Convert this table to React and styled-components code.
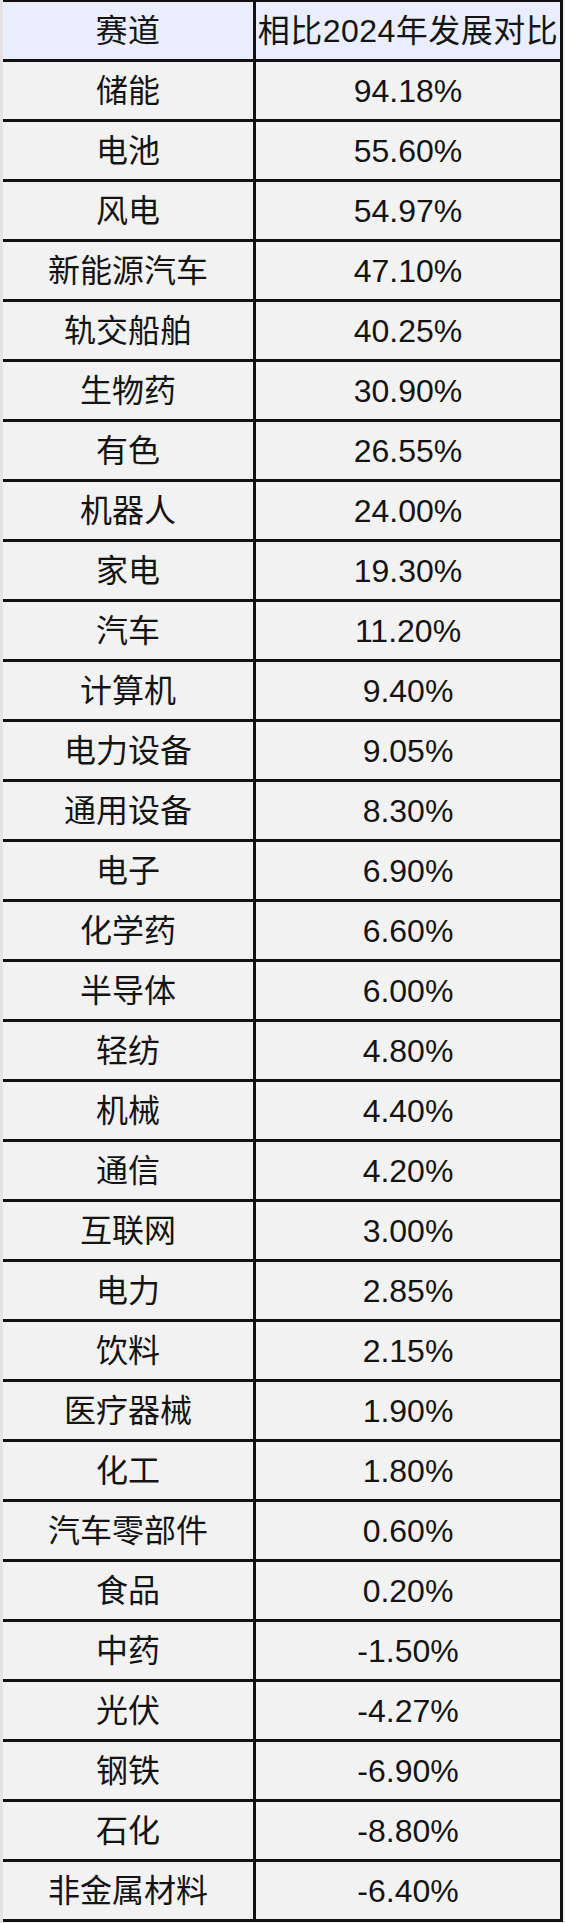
import React from "react";
import styled, { createGlobalStyle } from "styled-components";

const GlobalStyle = createGlobalStyle`
  html, body {
    margin: 0;
    padding: 0;
    background: #f0f0f0;
  }
  body {
    font-family: "Liberation Sans", "Noto Sans CJK SC", sans-serif;
    color: #111;
  }
`;

const Page = styled.div`
  display: flex;
  border-left: 3px solid #e2e2e2;
  min-height: 1923px;
  box-sizing: border-box;
`;

const Table = styled.div`
  display: grid;
  grid-template-columns: 250px 304px;
  grid-auto-rows: 57px;
  gap: 3px;
  background: #111;
  border-top: 2px solid #111;
  border-bottom: 3px solid #111;
  border-right: 3px solid #111;
  align-self: flex-start;
`;

const Cell = styled.div`
  display: flex;
  align-items: center;
  justify-content: center;
  background: ${(p) => (p.$head ? "#e9edfc" : "#f2f2f2")};
  font-size: 32px;
  line-height: 1;
  white-space: nowrap;
  overflow: hidden;
  letter-spacing: ${(p) => (p.$head ? "0.5px" : "0")};
  color: #141414;
`;

const rows = [
  ["储能", "94.18%"],
  ["电池", "55.60%"],
  ["风电", "54.97%"],
  ["新能源汽车", "47.10%"],
  ["轨交船舶", "40.25%"],
  ["生物药", "30.90%"],
  ["有色", "26.55%"],
  ["机器人", "24.00%"],
  ["家电", "19.30%"],
  ["汽车", "11.20%"],
  ["计算机", "9.40%"],
  ["电力设备", "9.05%"],
  ["通用设备", "8.30%"],
  ["电子", "6.90%"],
  ["化学药", "6.60%"],
  ["半导体", "6.00%"],
  ["轻纺", "4.80%"],
  ["机械", "4.40%"],
  ["通信", "4.20%"],
  ["互联网", "3.00%"],
  ["电力", "2.85%"],
  ["饮料", "2.15%"],
  ["医疗器械", "1.90%"],
  ["化工", "1.80%"],
  ["汽车零部件", "0.60%"],
  ["食品", "0.20%"],
  ["中药", "-1.50%"],
  ["光伏", "-4.27%"],
  ["钢铁", "-6.90%"],
  ["石化", "-8.80%"],
  ["非金属材料", "-6.40%"],
];

export default function App() {
  return (
    <>
      <GlobalStyle />
      <Page>
        <Table>
          <Cell $head>赛道</Cell>
          <Cell $head>相比2024年发展对比</Cell>
          {rows.map(([name, val]) => (
            <React.Fragment key={name}>
              <Cell>{name}</Cell>
              <Cell>{val}</Cell>
            </React.Fragment>
          ))}
        </Table>
      </Page>
    </>
  );
}
